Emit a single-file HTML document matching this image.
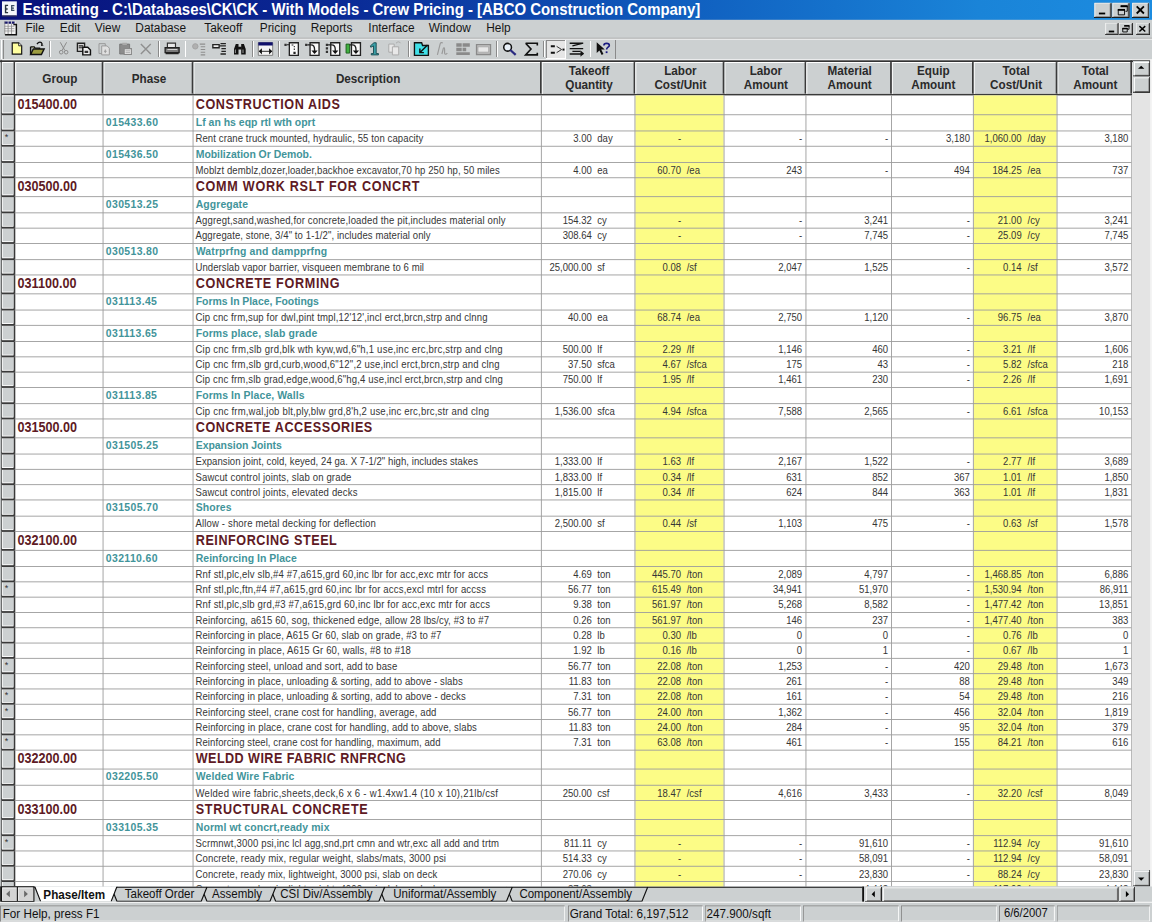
<!DOCTYPE html>
<html><head><meta charset="utf-8">
<style>
html,body{margin:0;padding:0;width:1152px;height:922px;overflow:hidden;background:#ccd0d1;}
#w{position:absolute;left:0;top:0;width:1280px;height:1024px;transform:scale(0.9);transform-origin:0 0;background:#ccd0d1;font-family:"Liberation Sans",sans-serif;overflow:hidden;}
#w div{position:absolute;}
.title{left:0;top:0;width:1280px;height:22px;background:linear-gradient(to right,#08107a 0%,#0a2a96 30%,#1060c0 60%,#1a84d8 85%,#1c8ce0 100%);}
.ttext{left:25px;top:1.5px;font-size:16.6px;font-weight:bold;color:#fff;white-space:pre;line-height:19px;transform:scaleY(1.1);transform-origin:0 15.5px;}
.mi{top:23.8px;font-size:13.2px;color:#161616;white-space:pre;line-height:15px;transform:scaleY(1.08);transform-origin:0 12px;}
.btn{background:#ccd0d1;box-shadow:inset -1px -1px #1a1a1a, inset 1px 1px #f4f4f4, inset -2px -2px #808080;}
.hc{top:69px;height:35px;background:#ccd0d1;border-right:2px solid #3a3a3a;box-shadow:inset 1px 1px #fff;}
#w .hc .hh{left:3px;right:0;text-align:center;font-size:13px;font-weight:bold;color:#2a2a2a;line-height:15px;white-space:pre;transform:scaleY(1.12);transform-origin:0 12px;}
.rh{left:2.2px;width:12.8px;background:#ccd0d1;box-shadow:inset 1px 1px #fff;}
.rhl{left:2px;width:14px;height:2px;background:#3a3a3a;}
.st{position:absolute;left:3px;top:2px;font-size:10px;color:#333;}
.hl{left:16px;width:1241px;height:1px;background:#9c9c9c;}
.vl{top:106px;width:1px;height:880px;background:#9c9c9c;}
.tg{font-size:14px;font-weight:bold;color:#5e1a24;line-height:14px;white-space:pre;}
.tg{transform:scaleY(1.12);transform-origin:0 11.85px;}
.tp{font-size:11.6px;font-weight:bold;color:#42949a;line-height:11.6px;white-space:pre;}
.ti{font-size:10.6px;color:#363636;line-height:10.6px;white-space:pre;transform:scaleY(1.17);transform-origin:0 8.97px;}
.yel{top:106px;height:880px;background:#fcfc86;}
.sb{background:#ccd0d1;box-shadow:inset -1px -1px #1a1a1a, inset 1px 1px #ccd0d1, inset 2px 2px #fff, inset -2px -2px #808080;}
.tab{font-size:12.8px;color:#111;line-height:1;white-space:pre;transform:scaleY(1.1);transform-origin:0 0.85em;}
.sp{top:1006px;height:18px;box-shadow:inset 1px 1px #808080, inset -1px -1px #fff;}
.stx{top:1009.3px;font-size:13px;color:#111;line-height:1;white-space:pre;transform:scaleY(1.1);transform-origin:0 0.85em;}
</style></head><body>
<div id="w">
<div class="title"></div>
<svg style="position:absolute;left:0;top:0" width="22" height="22">
<rect x="2.2" y="1.5" width="16.5" height="16" fill="#f4f6fa"/><rect x="2.2" y="17" width="16.5" height="1.5" fill="#30305a"/>
<path d="M9 6H6.2V14H9M6.2 10H8.5" fill="none" stroke="#2a3440" stroke-width="1.6"/>
<path d="M16 6.2H13V11.6H16M13 9H15.5" fill="none" stroke="#3a4a60" stroke-width="1.4"/>
</svg>
<div class="ttext">Estimating - C:\Databases\CK\CK - With Models - Crew Pricing - [ABCO Construction Company]</div>
<div class="btn" style="left:1216px;top:3px;width:19px;height:17px;"></div>
<div class="btn" style="left:1236px;top:3px;width:19px;height:17px;"></div>
<div class="btn" style="left:1258px;top:3px;width:19px;height:17px;"></div>
<svg style="position:absolute;left:1216px;top:3px" width="61" height="17">
<rect x="5" y="11" width="7" height="2" fill="#000"/>
<path d="M26.5 7.5h7v6h-7z" fill="none" stroke="#000" stroke-width="1"/><rect x="26" y="7" width="8" height="2" fill="#000"/>
<path d="M29.5 3.5h7v6h-2" fill="none" stroke="#000" stroke-width="1"/><rect x="29" y="3" width="8" height="2" fill="#000"/>
<path d="M47 4l8 8M55 4l-8 8" stroke="#000" stroke-width="2"/>
</svg>
<div class="mi" style="left:28.3px">File</div>
<div class="mi" style="left:66.4px">Edit</div>
<div class="mi" style="left:105.3px">View</div>
<div class="mi" style="left:150.4px">Database</div>
<div class="mi" style="left:227px">Takeoff</div>
<div class="mi" style="left:288.6px">Pricing</div>
<div class="mi" style="left:345.3px">Reports</div>
<div class="mi" style="left:409.3px">Interface</div>
<div class="mi" style="left:476.3px">Window</div>
<div class="mi" style="left:540.3px">Help</div>
<svg style="position:absolute;left:3px;top:23px" width="18" height="18">
<rect x="2" y="1" width="12.5" height="14.5" fill="#f2f2f2"/>
<path d="M2 1h3.6v2.4H2zM6.4 1h3v2.4h-3zM10.2 1h3v2.4h-3z" fill="#16166a"/>
<path d="M2 6.2h11M2 8.8h11M2 11.4h11" stroke="#9a9a9a" stroke-width="0.9"/>
<path d="M6 3v12.5M9.8 3v12.5" stroke="#888" stroke-width="0.9"/>
<path d="M2.3 1v14.6" stroke="#777" stroke-width="0.8"/>
<path d="M11.8 4.2H15.2V15.7H2.6" fill="none" stroke="#111" stroke-width="1.6"/>
</svg>
<div class="btn" style="left:1228px;top:25px;width:15px;height:14px;"></div>
<div class="btn" style="left:1243px;top:25px;width:16px;height:14px;"></div>
<div class="btn" style="left:1262px;top:25px;width:16px;height:14px;"></div>
<svg style="position:absolute;left:1228px;top:25px" width="50" height="14">
<rect x="4" y="9" width="6" height="2" fill="#000"/>
<path d="M19.5 6.5h5v4h-5z" fill="none" stroke="#000" stroke-width="1"/><rect x="19" y="6" width="6" height="1.6" fill="#000"/>
<path d="M21.5 3.5h5v4h-1.5" fill="none" stroke="#000" stroke-width="1"/><rect x="21" y="3" width="6" height="1.6" fill="#000"/>
<path d="M38 4l6.5 6M44.5 4l-6.5 6" stroke="#000" stroke-width="1.6"/>
</svg>
<div style="left:0;top:42px;width:1280px;height:1px;background:#9c9c9c"></div>
<div style="left:0;top:43px;width:1280px;height:1px;background:#f8f8f8"></div>
<svg style="position:absolute;left:0;top:43px" width="700" height="23" viewBox="0 0 700 23" shape-rendering="crispEdges">
<!-- grip -->
<rect x="1" y="1" width="1.5" height="21" fill="#fff"/><rect x="3" y="1" width="1.5" height="21" fill="#8a8a8a"/>
<!-- separators -->
<g fill="#8a8a8a"><rect x="54.5" y="3" width="1" height="17"/><rect x="176" y="3" width="1" height="17"/><rect x="205" y="3" width="1" height="17"/><rect x="280" y="3" width="1" height="17"/><rect x="309" y="3" width="1" height="17"/><rect x="453" y="3" width="1" height="17"/><rect x="551.5" y="3" width="1" height="17"/><rect x="603.5" y="3" width="1" height="17"/><rect x="655" y="3" width="1" height="17"/></g>
<g fill="#fff"><rect x="55.5" y="3" width="1" height="17"/><rect x="177" y="3" width="1" height="17"/><rect x="206" y="3" width="1" height="17"/><rect x="281" y="3" width="1" height="17"/><rect x="310" y="3" width="1" height="17"/><rect x="454" y="3" width="1" height="17"/><rect x="552.5" y="3" width="1" height="17"/><rect x="604.5" y="3" width="1" height="17"/><rect x="656" y="3" width="1" height="17"/></g>
<g shape-rendering="geometricPrecision">
<!-- new doc -->
<path d="M13.6 4.6h7.2l3.3 3.3v9.2h-10.5z" fill="#ffffa0" stroke="#111" stroke-width="1.3"/><path d="M20.8 4.6v3.3h3.3" fill="#fff" stroke="#111" stroke-width="1"/>
<!-- open folder -->
<path d="M34 9h4l1 1.5h5v2.5" fill="#e8e890" stroke="#111" stroke-width="1.4"/>
<path d="M34 17.5l3-6h12l-3 6z" fill="#9c9c40" stroke="#111" stroke-width="1.6"/>
<path d="M34 9v8.5" stroke="#111" stroke-width="1.6"/>
<path d="M41 6c2-3 5-3 6 0" fill="none" stroke="#111" stroke-width="1.3"/><path d="M46 5l2.5 2.5l-3 0.5z" fill="#111"/>
<!-- cut (gray) -->
<g fill="none" stroke="#8a8a8a" stroke-width="1.1"><path d="M67 4l5 9M74 4l-5 9"/><circle cx="68" cy="15" r="2"/><circle cx="73.5" cy="15" r="2"/></g>
<!-- copy -->
<path d="M86 5h8v9h-8z" fill="#d8d8d8" stroke="#222" stroke-width="1.5"/><path d="M87.5 8h5M87.5 10h5" stroke="#222" stroke-width="1.2"/>
<path d="M92 9.5h5.5l3 3v5.5h-8.5z" fill="#f0f0f0" stroke="#111" stroke-width="1.6"/><path d="M94 13.5h4v2.5h-4z" fill="#333"/>
<!-- doc grayed -->
<g fill="none" stroke="#9a9a9a" stroke-width="1.1"><path d="M110 5.5h7v11h-7z"/><path d="M113 8h6l2.5 2.5v7.5h-8.5z" fill="#e0e0e0"/><path d="M117 12v4M115.5 14h3"/></g>
<!-- clipboard grayed -->
<path d="M133 6h11v11h-11z" fill="#8c8c8c" stroke="#777" stroke-width="1"/><path d="M136 4.5h5v2.5h-5z" fill="#aaa"/><path d="M138 11h8v6.5h-8z" fill="#e6e6e6" stroke="#888" stroke-width="1.2"/><path d="M139.5 13.5h5M139.5 15.5h5" stroke="#999" stroke-width="0.8"/>
<!-- X gray -->
<path d="M156.5 6l11 11M167.5 6l-11 11" stroke="#909090" stroke-width="1.6"/>
<!-- printer -->
<path d="M186 5h9v5h-9z" fill="#e8e8e8" stroke="#333" stroke-width="1.3"/>
<path d="M183.5 10h15.5v5.5h-15.5z" fill="#7a7a7a" stroke="#222" stroke-width="1.5" rx="1"/>
<path d="M184 16.5h14.5" stroke="#222" stroke-width="1.6"/><path d="M186 12h11" stroke="#ddd" stroke-width="1"/>
<!-- gear list gray -->
<g stroke="#a0a0a0" fill="#b0b0b0" stroke-width="1"><circle cx="217" cy="8.5" r="3"/><path d="M222 6h6M223 9h5M223 12h5M223 15h5M223 18h5" fill="none" stroke="#8e8e8e" stroke-width="1.2"/></g>
<!-- rect list -->
<path d="M236.5 6.5h7v3.5h-7z" fill="#eee" stroke="#222" stroke-width="1.5"/><path d="M244 8h7M245 5.5h6M246 11h5M246 14h5M245 17h6" stroke="#222" stroke-width="1.5"/>
<!-- binoculars -->
<path d="M260 17.5v-6l2-5.5h3v11.5z M268 17.5v-11.5h3l2 5.5v6z" fill="#111"/><path d="M264.5 9h4v3h-4z" fill="#111"/><path d="M261.5 12v4M270 12v4" stroke="#aaa" stroke-width="1"/>
<!-- window arrows -->
<path d="M287 4.5h16v14h-16z" fill="#f4f4f4" stroke="#777" stroke-width="1"/><path d="M287 4h16v3.5h-16z" fill="#10106a"/>
<path d="M288 14h14" stroke="#555" stroke-width="1.5"/><path d="M287.5 14l3.5-3.5v7z M302.5 14l-3.5-3.5v7z" fill="#111"/>
<!-- dotted doc -->
<path d="M321.5 4.5h10v14h-10z" fill="#fafafa" stroke="#222" stroke-width="1.5"/><path d="M316 5.5h2.5v2.5h-2.5z" fill="#333"/><path d="M318.5 6.8h3M324 7h2M327 8v1.5M327 11v1.5" stroke="#222" stroke-width="1.2"/><path d="M326 14.5h2.5v2.5h-2.5z" fill="#222"/>
<!-- doc arrow -->
<path d="M344.5 4.5h10v14h-10z" fill="#fafafa" stroke="#222" stroke-width="1.5"/><path d="M339 5.5h2.5v2.5h-2.5z" fill="#333"/><path d="M341.5 6.8h4c3 0 4 2 4 5v3" fill="none" stroke="#222" stroke-width="1.5"/><path d="M346 13h7l-3.5 4z" fill="#111"/>
<!-- doc arrow dots -->
<path d="M367.5 4.5h10v14h-10z" fill="#fafafa" stroke="#222" stroke-width="1.5"/><path d="M362 5.5h2.5v2.5h-2.5zM362 9.5h2.5v2.5h-2.5zM362 13.5h2.5v2.5h-2.5z" fill="#333"/><path d="M364.5 6.8h4c3 0 4 2 4 5v3" fill="none" stroke="#222" stroke-width="1.5"/><path d="M369 13h7l-3.5 4z" fill="#111"/>
<!-- green doc arrow -->
<path d="M390.5 4.5h10v14h-10z" fill="#fafafa" stroke="#222" stroke-width="1.5"/><path d="M384.5 6h4v10h-4z" fill="#40b040" stroke="#1a5a1a" stroke-width="1"/><path d="M388.5 6.8h3c3 0 4 2 4 5v3" fill="none" stroke="#222" stroke-width="1.5"/><path d="M392 13h7l-3.5 4z" fill="#111"/>
<!-- 1 teal -->
<path d="M411.5 8l4-3.5h2.5v12h2.5v1.5h-8v-1.5h2.5v-8.5l-3 1.5z" fill="#3aa0a8" stroke="#1a4a50" stroke-width="1"/>
<!-- gray docs -->
<g fill="#e8e8e8" stroke="#a6a6a6" stroke-width="1"><path d="M432 6h6v9h-6z"/><path d="M436 9h7v9h-7z"/><path d="M440 5c2-2 4-2 5 0" fill="none"/></g>
<!-- cyan -->
<path d="M460.5 4.5h8l1 3h6.5v11h-15.5z" fill="#40e0e8" stroke="#111" stroke-width="1.5"/><path d="M467 15l8-8M466.5 11v4.5h4.5" fill="none" stroke="#111" stroke-width="1.6"/>
<!-- fx gray -->
<path d="M486 18l3-12c0.5-2 2-2 3-1M491 17l1.5-6c0.5-1.5 1.5-1 1.5 1v4c0 1.5 1.5 2 3 0" fill="none" stroke="#9a9a9a" stroke-width="1.3"/>
<!-- grid gray -->
<path d="M507 5h6v4h-6zM514 5h8v4h-8zM507 10h6v4h-6zM514 10h4v4h-4zM507 15h15v3h-15z" fill="#8a8a8a"/>
<!-- window gray -->
<path d="M529.5 6.5h15.5v11h-15.5z" fill="#c4c4c4" stroke="#8a8a8a" stroke-width="1.5"/><path d="M531 9h12v6h-12z" fill="#e8e8e8" stroke="#9a9a9a" stroke-width="0.8"/>
<!-- magnifier -->
<circle cx="564" cy="9.5" r="4.3" fill="#e8f0f8" stroke="#111" stroke-width="1.7"/><path d="M567 12.5l6 5.5" stroke="#2a2a80" stroke-width="2.4"/>
<!-- sigma -->
<path d="M584 5h13v2.5M584 5l6 6.5l-6 6.5h13v-2.5" fill="none" stroke="#111" stroke-width="1.8"/>
</g>
<!-- pressed button -->
<rect x="607" y="1" width="22" height="21" fill="#e6e6e6"/><rect x="607" y="1" width="22" height="1" fill="#8a8a8a"/><rect x="607" y="1" width="1" height="21" fill="#8a8a8a"/><rect x="607" y="21" width="22" height="1" fill="#fff"/><rect x="628" y="1" width="1" height="21" fill="#fff"/>
<g shape-rendering="geometricPrecision">
<path d="M612 8.5h4.5M612 15.5h4.5" stroke="#111" stroke-width="2.2"/><path d="M618.5 8.5l5.5 3.5l-5.5 3.5" fill="none" stroke="#222" stroke-width="1"/><rect x="625" y="11" width="2.2" height="2.2" fill="#111"/>
<!-- stack arrows -->
<path d="M633 5h15M636 8l12-3M633 11h15M636 14h9M633 17h15" fill="none" stroke="#111" stroke-width="1.5"/><path d="M645 13l4 3.5l-4 3.5z" fill="#111"/>
<!-- ? pointer -->
<path d="M663 4v12l3-3l2.5 5l2-1l-2.5-5h4z" fill="#111"/><path d="M671 7.5c0-3 6-3 6 0c0 2-3 2-3 4.5" fill="none" stroke="#1a1a80" stroke-width="1.8"/><rect x="673" y="14" width="2" height="2" fill="#1a1a80"/>
</g>
<rect x="683" y="1" width="1" height="21" fill="#8a8a8a"/>
</svg>

<div style="left:2px;top:66px;width:1278px;height:920px;background:#fff"></div>
<div style="left:0;top:67px;width:1258px;height:2px;background:#333"></div>
<div style="left:1px;top:67px;width:1.2px;height:918px;background:#333"></div>
<div class="rh" style="top:69px;height:35px"></div>
<div style="left:15px;top:69px;width:1.6px;height:916px;background:#3a3a3a"></div>
<div style="left:2px;top:104px;width:1256px;height:2px;background:#3a3a3a"></div>
<div class="yel" style="left:706px;width:98px"></div>
<div class="yel" style="left:1082px;width:92px"></div>
<div class="hc" style="left:17px;width:96px"><div class="hh" style="top:11px">Group</div></div>
<div class="hc" style="left:115px;width:98px"><div class="hh" style="top:11px">Phase</div></div>
<div class="hc" style="left:215px;width:385px"><div class="hh" style="top:11px">Description</div></div>
<div class="hc" style="left:602px;width:102px"><div class="hh" style="top:1.5px">Takeoff</div><div class="hh" style="top:17.7px">Quantity</div></div>
<div class="hc" style="left:706px;width:97px"><div class="hh" style="top:1.5px">Labor</div><div class="hh" style="top:17.7px">Cost/Unit</div></div>
<div class="hc" style="left:805px;width:89px"><div class="hh" style="top:1.5px">Labor</div><div class="hh" style="top:17.7px">Amount</div></div>
<div class="hc" style="left:896px;width:93px"><div class="hh" style="top:1.5px">Material</div><div class="hh" style="top:17.7px">Amount</div></div>
<div class="hc" style="left:991px;width:89px"><div class="hh" style="top:1.5px">Equip</div><div class="hh" style="top:17.7px">Amount</div></div>
<div class="hc" style="left:1082px;width:91px"><div class="hh" style="top:1.5px">Total</div><div class="hh" style="top:17.7px">Cost/Unit</div></div>
<div class="hc" style="left:1175px;width:81px"><div class="hh" style="top:1.5px">Total</div><div class="hh" style="top:17.7px">Amount</div></div>
<div class="vl" style="left:114px"></div>
<div class="vl" style="left:214px"></div>
<div class="vl" style="left:601px"></div>
<div class="vl" style="left:705px"></div>
<div class="vl" style="left:804px"></div>
<div class="vl" style="left:895px"></div>
<div class="vl" style="left:990px"></div>
<div class="vl" style="left:1081px"></div>
<div class="vl" style="left:1174px"></div>
<div class="vl" style="left:1257px"></div>
<div class="rh" style="top:106px;height:19px"></div>
<div class="tg gc" style="top:108.75px;left:19.5px">015400.00</div>
<div class="tg gd" style="top:108.75px;left:217.5px;letter-spacing:0.664px">CONSTRUCTION AIDS</div>
<div class="rh" style="top:127px;height:16px"></div>
<div class="tp" style="top:130.2px;left:117.6px;letter-spacing:0.4px">015433.60</div>
<div class="tp" style="top:130.2px;left:217.5px;letter-spacing:0.025px">Lf an hs eqp rtl wth oprt</div>
<div class="rh" style="top:145px;height:15px"><span class=st>*</span></div>
<div class="ti" style="top:148.6px;left:217.2px;letter-spacing:0.113px">Rent crane truck mounted, hydraulic, 55 ton capacity</div>
<div class="ti r" style="top:148.6px;right:622.4px">3.00</div>
<div class="ti" style="top:148.6px;left:663.7px">day</div>
<div class="ti r" style="top:148.6px;right:523.2px">-</div>
<div class="ti r" style="top:148.6px;right:388.79999999999995px">-</div>
<div class="ti r" style="top:148.6px;right:293.20000000000005px">-</div>
<div class="ti r" style="top:148.6px;right:202.29999999999995px">3,180</div>
<div class="ti r" style="top:148.6px;right:144.79999999999995px">1,060.00</div>
<div class="ti" style="top:148.6px;left:1141.8px">/day</div>
<div class="ti r" style="top:148.6px;right:26.40000000000009px">3,180</div>
<div class="rh" style="top:162px;height:16px"></div>
<div class="tp" style="top:165.2px;left:117.6px;letter-spacing:0.4px">015436.50</div>
<div class="tp" style="top:165.2px;left:217.5px;letter-spacing:-0.026px">Mobilization Or Demob.</div>
<div class="rh" style="top:180px;height:15px"></div>
<div class="ti" style="top:183.6px;left:217.2px;letter-spacing:0.117px">Moblzt demblz,dozer,loader,backhoe excavator,70 hp 250 hp, 50 miles</div>
<div class="ti r" style="top:183.6px;right:622.4px">4.00</div>
<div class="ti" style="top:183.6px;left:663.7px">ea</div>
<div class="ti r" style="top:183.6px;right:523.2px">60.70</div>
<div class="ti" style="top:183.6px;left:763px">/ea</div>
<div class="ti r" style="top:183.6px;right:388.79999999999995px">243</div>
<div class="ti r" style="top:183.6px;right:293.20000000000005px">-</div>
<div class="ti r" style="top:183.6px;right:202.29999999999995px">494</div>
<div class="ti r" style="top:183.6px;right:144.79999999999995px">184.25</div>
<div class="ti" style="top:183.6px;left:1141.8px">/ea</div>
<div class="ti r" style="top:183.6px;right:26.40000000000009px">737</div>
<div class="rh" style="top:197px;height:19px"></div>
<div class="tg gc" style="top:199.75px;left:19.5px">030500.00</div>
<div class="tg gd" style="top:199.75px;left:217.5px;letter-spacing:0.807px">COMM WORK RSLT FOR CONCRT</div>
<div class="rh" style="top:218px;height:16px"></div>
<div class="tp" style="top:221.2px;left:117.6px;letter-spacing:0.4px">030513.25</div>
<div class="tp" style="top:221.2px;left:217.5px;letter-spacing:0.085px">Aggregate</div>
<div class="rh" style="top:236px;height:15px"></div>
<div class="ti" style="top:239.6px;left:217.2px;letter-spacing:0.169px">Aggregt,sand,washed,for concrete,loaded the pit,includes material only</div>
<div class="ti r" style="top:239.6px;right:622.4px">154.32</div>
<div class="ti" style="top:239.6px;left:663.7px">cy</div>
<div class="ti r" style="top:239.6px;right:523.2px">-</div>
<div class="ti r" style="top:239.6px;right:388.79999999999995px">-</div>
<div class="ti r" style="top:239.6px;right:293.20000000000005px">3,241</div>
<div class="ti r" style="top:239.6px;right:202.29999999999995px">-</div>
<div class="ti r" style="top:239.6px;right:144.79999999999995px">21.00</div>
<div class="ti" style="top:239.6px;left:1141.8px">/cy</div>
<div class="ti r" style="top:239.6px;right:26.40000000000009px">3,241</div>
<div class="rh" style="top:253px;height:15px"></div>
<div class="ti" style="top:256.6px;left:217.2px;letter-spacing:0.105px">Aggregate, stone, 3/4" to 1-1/2", includes material only</div>
<div class="ti r" style="top:256.6px;right:622.4px">308.64</div>
<div class="ti" style="top:256.6px;left:663.7px">cy</div>
<div class="ti r" style="top:256.6px;right:523.2px">-</div>
<div class="ti r" style="top:256.6px;right:388.79999999999995px">-</div>
<div class="ti r" style="top:256.6px;right:293.20000000000005px">7,745</div>
<div class="ti r" style="top:256.6px;right:202.29999999999995px">-</div>
<div class="ti r" style="top:256.6px;right:144.79999999999995px">25.09</div>
<div class="ti" style="top:256.6px;left:1141.8px">/cy</div>
<div class="ti r" style="top:256.6px;right:26.40000000000009px">7,745</div>
<div class="rh" style="top:270px;height:16px"></div>
<div class="tp" style="top:273.2px;left:117.6px;letter-spacing:0.4px">030513.80</div>
<div class="tp" style="top:273.2px;left:217.5px;letter-spacing:0.155px">Watrprfng and dampprfng</div>
<div class="rh" style="top:288px;height:15px"></div>
<div class="ti" style="top:291.6px;left:217.2px;letter-spacing:0.085px">Underslab vapor barrier, visqueen membrane to 6 mil</div>
<div class="ti r" style="top:291.6px;right:622.4px">25,000.00</div>
<div class="ti" style="top:291.6px;left:663.7px">sf</div>
<div class="ti r" style="top:291.6px;right:523.2px">0.08</div>
<div class="ti" style="top:291.6px;left:763px">/sf</div>
<div class="ti r" style="top:291.6px;right:388.79999999999995px">2,047</div>
<div class="ti r" style="top:291.6px;right:293.20000000000005px">1,525</div>
<div class="ti r" style="top:291.6px;right:202.29999999999995px">-</div>
<div class="ti r" style="top:291.6px;right:144.79999999999995px">0.14</div>
<div class="ti" style="top:291.6px;left:1141.8px">/sf</div>
<div class="ti r" style="top:291.6px;right:26.40000000000009px">3,572</div>
<div class="rh" style="top:305px;height:19px"></div>
<div class="tg gc" style="top:307.75px;left:19.5px">031100.00</div>
<div class="tg gd" style="top:307.75px;left:217.5px;letter-spacing:0.757px">CONCRETE FORMING</div>
<div class="rh" style="top:326px;height:16px"></div>
<div class="tp" style="top:329.2px;left:117.6px;letter-spacing:0.4px">031113.45</div>
<div class="tp" style="top:329.2px;left:217.5px;letter-spacing:-0.045px">Forms In Place, Footings</div>
<div class="rh" style="top:344px;height:15px"></div>
<div class="ti" style="top:347.6px;left:217.2px;letter-spacing:0.156px">Cip cnc frm,sup for dwl,pint tmpl,12'12',incl erct,brcn,strp and clnng</div>
<div class="ti r" style="top:347.6px;right:622.4px">40.00</div>
<div class="ti" style="top:347.6px;left:663.7px">ea</div>
<div class="ti r" style="top:347.6px;right:523.2px">68.74</div>
<div class="ti" style="top:347.6px;left:763px">/ea</div>
<div class="ti r" style="top:347.6px;right:388.79999999999995px">2,750</div>
<div class="ti r" style="top:347.6px;right:293.20000000000005px">1,120</div>
<div class="ti r" style="top:347.6px;right:202.29999999999995px">-</div>
<div class="ti r" style="top:347.6px;right:144.79999999999995px">96.75</div>
<div class="ti" style="top:347.6px;left:1141.8px">/ea</div>
<div class="ti r" style="top:347.6px;right:26.40000000000009px">3,870</div>
<div class="rh" style="top:361px;height:16px"></div>
<div class="tp" style="top:364.2px;left:117.6px;letter-spacing:0.4px">031113.65</div>
<div class="tp" style="top:364.2px;left:217.5px;letter-spacing:0.103px">Forms place, slab grade</div>
<div class="rh" style="top:379px;height:15px"></div>
<div class="ti" style="top:382.6px;left:217.2px;letter-spacing:0.25px">Cip cnc frm,slb grd,blk wth kyw,wd,6"h,1 use,inc erc,brc,strp and clng</div>
<div class="ti r" style="top:382.6px;right:622.4px">500.00</div>
<div class="ti" style="top:382.6px;left:663.7px">lf</div>
<div class="ti r" style="top:382.6px;right:523.2px">2.29</div>
<div class="ti" style="top:382.6px;left:763px">/lf</div>
<div class="ti r" style="top:382.6px;right:388.79999999999995px">1,146</div>
<div class="ti r" style="top:382.6px;right:293.20000000000005px">460</div>
<div class="ti r" style="top:382.6px;right:202.29999999999995px">-</div>
<div class="ti r" style="top:382.6px;right:144.79999999999995px">3.21</div>
<div class="ti" style="top:382.6px;left:1141.8px">/lf</div>
<div class="ti r" style="top:382.6px;right:26.40000000000009px">1,606</div>
<div class="rh" style="top:396px;height:15px"></div>
<div class="ti" style="top:399.6px;left:217.2px;letter-spacing:0.206px">Cip cnc frm,slb grd,curb,wood,6"12",2 use,incl erct,brcn,strp and clng</div>
<div class="ti r" style="top:399.6px;right:622.4px">37.50</div>
<div class="ti" style="top:399.6px;left:663.7px">sfca</div>
<div class="ti r" style="top:399.6px;right:523.2px">4.67</div>
<div class="ti" style="top:399.6px;left:763px">/sfca</div>
<div class="ti r" style="top:399.6px;right:388.79999999999995px">175</div>
<div class="ti r" style="top:399.6px;right:293.20000000000005px">43</div>
<div class="ti r" style="top:399.6px;right:202.29999999999995px">-</div>
<div class="ti r" style="top:399.6px;right:144.79999999999995px">5.82</div>
<div class="ti" style="top:399.6px;left:1141.8px">/sfca</div>
<div class="ti r" style="top:399.6px;right:26.40000000000009px">218</div>
<div class="rh" style="top:413px;height:15px"></div>
<div class="ti" style="top:416.6px;left:217.2px;letter-spacing:0.182px">Cip cnc frm,slb grad,edge,wood,6"hg,4 use,incl erct,brcn,strp and clng</div>
<div class="ti r" style="top:416.6px;right:622.4px">750.00</div>
<div class="ti" style="top:416.6px;left:663.7px">lf</div>
<div class="ti r" style="top:416.6px;right:523.2px">1.95</div>
<div class="ti" style="top:416.6px;left:763px">/lf</div>
<div class="ti r" style="top:416.6px;right:388.79999999999995px">1,461</div>
<div class="ti r" style="top:416.6px;right:293.20000000000005px">230</div>
<div class="ti r" style="top:416.6px;right:202.29999999999995px">-</div>
<div class="ti r" style="top:416.6px;right:144.79999999999995px">2.26</div>
<div class="ti" style="top:416.6px;left:1141.8px">/lf</div>
<div class="ti r" style="top:416.6px;right:26.40000000000009px">1,691</div>
<div class="rh" style="top:430px;height:16px"></div>
<div class="tp" style="top:433.2px;left:117.6px;letter-spacing:0.4px">031113.85</div>
<div class="tp" style="top:433.2px;left:217.5px;letter-spacing:0.106px">Forms In Place, Walls</div>
<div class="rh" style="top:448px;height:15px"></div>
<div class="ti" style="top:451.6px;left:217.2px;letter-spacing:0.211px">Cip cnc frm,wal,job blt,ply,blw grd,8'h,2 use,inc erc,brc,str and clng</div>
<div class="ti r" style="top:451.6px;right:622.4px">1,536.00</div>
<div class="ti" style="top:451.6px;left:663.7px">sfca</div>
<div class="ti r" style="top:451.6px;right:523.2px">4.94</div>
<div class="ti" style="top:451.6px;left:763px">/sfca</div>
<div class="ti r" style="top:451.6px;right:388.79999999999995px">7,588</div>
<div class="ti r" style="top:451.6px;right:293.20000000000005px">2,565</div>
<div class="ti r" style="top:451.6px;right:202.29999999999995px">-</div>
<div class="ti r" style="top:451.6px;right:144.79999999999995px">6.61</div>
<div class="ti" style="top:451.6px;left:1141.8px">/sfca</div>
<div class="ti r" style="top:451.6px;right:26.40000000000009px">10,153</div>
<div class="rh" style="top:465px;height:19px"></div>
<div class="tg gc" style="top:467.75px;left:19.5px">031500.00</div>
<div class="tg gd" style="top:467.75px;left:217.5px;letter-spacing:0.647px">CONCRETE ACCESSORIES</div>
<div class="rh" style="top:486px;height:16px"></div>
<div class="tp" style="top:489.2px;left:117.6px;letter-spacing:0.4px">031505.25</div>
<div class="tp" style="top:489.2px;left:217.5px;letter-spacing:-0.021px">Expansion Joints</div>
<div class="rh" style="top:504px;height:15px"></div>
<div class="ti" style="top:507.6px;left:217.2px;letter-spacing:0.076px">Expansion joint, cold, keyed, 24 ga. X 7-1/2" high, includes stakes</div>
<div class="ti r" style="top:507.6px;right:622.4px">1,333.00</div>
<div class="ti" style="top:507.6px;left:663.7px">lf</div>
<div class="ti r" style="top:507.6px;right:523.2px">1.63</div>
<div class="ti" style="top:507.6px;left:763px">/lf</div>
<div class="ti r" style="top:507.6px;right:388.79999999999995px">2,167</div>
<div class="ti r" style="top:507.6px;right:293.20000000000005px">1,522</div>
<div class="ti r" style="top:507.6px;right:202.29999999999995px">-</div>
<div class="ti r" style="top:507.6px;right:144.79999999999995px">2.77</div>
<div class="ti" style="top:507.6px;left:1141.8px">/lf</div>
<div class="ti r" style="top:507.6px;right:26.40000000000009px">3,689</div>
<div class="rh" style="top:521px;height:15px"></div>
<div class="ti" style="top:524.6px;left:217.2px;letter-spacing:0.172px">Sawcut control joints, slab on grade</div>
<div class="ti r" style="top:524.6px;right:622.4px">1,833.00</div>
<div class="ti" style="top:524.6px;left:663.7px">lf</div>
<div class="ti r" style="top:524.6px;right:523.2px">0.34</div>
<div class="ti" style="top:524.6px;left:763px">/lf</div>
<div class="ti r" style="top:524.6px;right:388.79999999999995px">631</div>
<div class="ti r" style="top:524.6px;right:293.20000000000005px">852</div>
<div class="ti r" style="top:524.6px;right:202.29999999999995px">367</div>
<div class="ti r" style="top:524.6px;right:144.79999999999995px">1.01</div>
<div class="ti" style="top:524.6px;left:1141.8px">/lf</div>
<div class="ti r" style="top:524.6px;right:26.40000000000009px">1,850</div>
<div class="rh" style="top:538px;height:15px"></div>
<div class="ti" style="top:541.6px;left:217.2px;letter-spacing:0.173px">Sawcut control joints, elevated decks</div>
<div class="ti r" style="top:541.6px;right:622.4px">1,815.00</div>
<div class="ti" style="top:541.6px;left:663.7px">lf</div>
<div class="ti r" style="top:541.6px;right:523.2px">0.34</div>
<div class="ti" style="top:541.6px;left:763px">/lf</div>
<div class="ti r" style="top:541.6px;right:388.79999999999995px">624</div>
<div class="ti r" style="top:541.6px;right:293.20000000000005px">844</div>
<div class="ti r" style="top:541.6px;right:202.29999999999995px">363</div>
<div class="ti r" style="top:541.6px;right:144.79999999999995px">1.01</div>
<div class="ti" style="top:541.6px;left:1141.8px">/lf</div>
<div class="ti r" style="top:541.6px;right:26.40000000000009px">1,831</div>
<div class="rh" style="top:555px;height:16px"></div>
<div class="tp" style="top:558.2px;left:117.6px;letter-spacing:0.4px">031505.70</div>
<div class="tp" style="top:558.2px;left:217.5px;letter-spacing:0.096px">Shores</div>
<div class="rh" style="top:573px;height:15px"></div>
<div class="ti" style="top:576.6px;left:217.2px;letter-spacing:0.174px">Allow - shore metal decking for deflection</div>
<div class="ti r" style="top:576.6px;right:622.4px">2,500.00</div>
<div class="ti" style="top:576.6px;left:663.7px">sf</div>
<div class="ti r" style="top:576.6px;right:523.2px">0.44</div>
<div class="ti" style="top:576.6px;left:763px">/sf</div>
<div class="ti r" style="top:576.6px;right:388.79999999999995px">1,103</div>
<div class="ti r" style="top:576.6px;right:293.20000000000005px">475</div>
<div class="ti r" style="top:576.6px;right:202.29999999999995px">-</div>
<div class="ti r" style="top:576.6px;right:144.79999999999995px">0.63</div>
<div class="ti" style="top:576.6px;left:1141.8px">/sf</div>
<div class="ti r" style="top:576.6px;right:26.40000000000009px">1,578</div>
<div class="rh" style="top:590px;height:19px"></div>
<div class="tg gc" style="top:592.75px;left:19.5px">032100.00</div>
<div class="tg gd" style="top:592.75px;left:217.5px;letter-spacing:0.607px">REINFORCING STEEL</div>
<div class="rh" style="top:611px;height:16px"></div>
<div class="tp" style="top:614.2px;left:117.6px;letter-spacing:0.4px">032110.60</div>
<div class="tp" style="top:614.2px;left:217.5px;letter-spacing:0.038px">Reinforcing In Place</div>
<div class="rh" style="top:629px;height:15px"></div>
<div class="ti" style="top:632.6px;left:217.2px;letter-spacing:0.19px">Rnf stl,plc,elv slb,#4 #7,a615,grd 60,inc lbr for acc,exc mtr for accs</div>
<div class="ti r" style="top:632.6px;right:622.4px">4.69</div>
<div class="ti" style="top:632.6px;left:663.7px">ton</div>
<div class="ti r" style="top:632.6px;right:523.2px">445.70</div>
<div class="ti" style="top:632.6px;left:763px">/ton</div>
<div class="ti r" style="top:632.6px;right:388.79999999999995px">2,089</div>
<div class="ti r" style="top:632.6px;right:293.20000000000005px">4,797</div>
<div class="ti r" style="top:632.6px;right:202.29999999999995px">-</div>
<div class="ti r" style="top:632.6px;right:144.79999999999995px">1,468.85</div>
<div class="ti" style="top:632.6px;left:1141.8px">/ton</div>
<div class="ti r" style="top:632.6px;right:26.40000000000009px">6,886</div>
<div class="rh" style="top:646px;height:15px"><span class=st>*</span></div>
<div class="ti" style="top:649.6px;left:217.2px;letter-spacing:0.198px">Rnf stl,plc,ftn,#4 #7,a615,grd 60,inc lbr for accs,excl mtrl for accss</div>
<div class="ti r" style="top:649.6px;right:622.4px">56.77</div>
<div class="ti" style="top:649.6px;left:663.7px">ton</div>
<div class="ti r" style="top:649.6px;right:523.2px">615.49</div>
<div class="ti" style="top:649.6px;left:763px">/ton</div>
<div class="ti r" style="top:649.6px;right:388.79999999999995px">34,941</div>
<div class="ti r" style="top:649.6px;right:293.20000000000005px">51,970</div>
<div class="ti r" style="top:649.6px;right:202.29999999999995px">-</div>
<div class="ti r" style="top:649.6px;right:144.79999999999995px">1,530.94</div>
<div class="ti" style="top:649.6px;left:1141.8px">/ton</div>
<div class="ti r" style="top:649.6px;right:26.40000000000009px">86,911</div>
<div class="rh" style="top:663px;height:15px"></div>
<div class="ti" style="top:666.6px;left:217.2px;letter-spacing:0.193px">Rnf stl,plc,slb grd,#3 #7,a615,grd 60,inc lbr for acc,exc mtr for accs</div>
<div class="ti r" style="top:666.6px;right:622.4px">9.38</div>
<div class="ti" style="top:666.6px;left:663.7px">ton</div>
<div class="ti r" style="top:666.6px;right:523.2px">561.97</div>
<div class="ti" style="top:666.6px;left:763px">/ton</div>
<div class="ti r" style="top:666.6px;right:388.79999999999995px">5,268</div>
<div class="ti r" style="top:666.6px;right:293.20000000000005px">8,582</div>
<div class="ti r" style="top:666.6px;right:202.29999999999995px">-</div>
<div class="ti r" style="top:666.6px;right:144.79999999999995px">1,477.42</div>
<div class="ti" style="top:666.6px;left:1141.8px">/ton</div>
<div class="ti r" style="top:666.6px;right:26.40000000000009px">13,851</div>
<div class="rh" style="top:680px;height:15px"></div>
<div class="ti" style="top:683.6px;left:217.2px;letter-spacing:0.142px">Reinforcing, a615 60, sog, thickened edge, allow 28 lbs/cy, #3 to #7</div>
<div class="ti r" style="top:683.6px;right:622.4px">0.26</div>
<div class="ti" style="top:683.6px;left:663.7px">ton</div>
<div class="ti r" style="top:683.6px;right:523.2px">561.97</div>
<div class="ti" style="top:683.6px;left:763px">/ton</div>
<div class="ti r" style="top:683.6px;right:388.79999999999995px">146</div>
<div class="ti r" style="top:683.6px;right:293.20000000000005px">237</div>
<div class="ti r" style="top:683.6px;right:202.29999999999995px">-</div>
<div class="ti r" style="top:683.6px;right:144.79999999999995px">1,477.40</div>
<div class="ti" style="top:683.6px;left:1141.8px">/ton</div>
<div class="ti r" style="top:683.6px;right:26.40000000000009px">383</div>
<div class="rh" style="top:697px;height:15px"></div>
<div class="ti" style="top:700.6px;left:217.2px;letter-spacing:0.115px">Reinforcing in place, A615 Gr 60, slab on grade, #3 to #7</div>
<div class="ti r" style="top:700.6px;right:622.4px">0.28</div>
<div class="ti" style="top:700.6px;left:663.7px">lb</div>
<div class="ti r" style="top:700.6px;right:523.2px">0.30</div>
<div class="ti" style="top:700.6px;left:763px">/lb</div>
<div class="ti r" style="top:700.6px;right:388.79999999999995px">0</div>
<div class="ti r" style="top:700.6px;right:293.20000000000005px">0</div>
<div class="ti r" style="top:700.6px;right:202.29999999999995px">-</div>
<div class="ti r" style="top:700.6px;right:144.79999999999995px">0.76</div>
<div class="ti" style="top:700.6px;left:1141.8px">/lb</div>
<div class="ti r" style="top:700.6px;right:26.40000000000009px">0</div>
<div class="rh" style="top:714px;height:15px"></div>
<div class="ti" style="top:717.6px;left:217.2px;letter-spacing:0.15px">Reinforcing in place, A615 Gr 60, walls, #8 to #18</div>
<div class="ti r" style="top:717.6px;right:622.4px">1.92</div>
<div class="ti" style="top:717.6px;left:663.7px">lb</div>
<div class="ti r" style="top:717.6px;right:523.2px">0.16</div>
<div class="ti" style="top:717.6px;left:763px">/lb</div>
<div class="ti r" style="top:717.6px;right:388.79999999999995px">0</div>
<div class="ti r" style="top:717.6px;right:293.20000000000005px">1</div>
<div class="ti r" style="top:717.6px;right:202.29999999999995px">-</div>
<div class="ti r" style="top:717.6px;right:144.79999999999995px">0.67</div>
<div class="ti" style="top:717.6px;left:1141.8px">/lb</div>
<div class="ti r" style="top:717.6px;right:26.40000000000009px">1</div>
<div class="rh" style="top:731px;height:15px"><span class=st>*</span></div>
<div class="ti" style="top:734.6px;left:217.2px;letter-spacing:0.111px">Reinforcing steel, unload and sort, add to base</div>
<div class="ti r" style="top:734.6px;right:622.4px">56.77</div>
<div class="ti" style="top:734.6px;left:663.7px">ton</div>
<div class="ti r" style="top:734.6px;right:523.2px">22.08</div>
<div class="ti" style="top:734.6px;left:763px">/ton</div>
<div class="ti r" style="top:734.6px;right:388.79999999999995px">1,253</div>
<div class="ti r" style="top:734.6px;right:293.20000000000005px">-</div>
<div class="ti r" style="top:734.6px;right:202.29999999999995px">420</div>
<div class="ti r" style="top:734.6px;right:144.79999999999995px">29.48</div>
<div class="ti" style="top:734.6px;left:1141.8px">/ton</div>
<div class="ti r" style="top:734.6px;right:26.40000000000009px">1,673</div>
<div class="rh" style="top:748px;height:15px"></div>
<div class="ti" style="top:751.6px;left:217.2px;letter-spacing:0.096px">Reinforcing in place, unloading &amp; sorting, add to above - slabs</div>
<div class="ti r" style="top:751.6px;right:622.4px">11.83</div>
<div class="ti" style="top:751.6px;left:663.7px">ton</div>
<div class="ti r" style="top:751.6px;right:523.2px">22.08</div>
<div class="ti" style="top:751.6px;left:763px">/ton</div>
<div class="ti r" style="top:751.6px;right:388.79999999999995px">261</div>
<div class="ti r" style="top:751.6px;right:293.20000000000005px">-</div>
<div class="ti r" style="top:751.6px;right:202.29999999999995px">88</div>
<div class="ti r" style="top:751.6px;right:144.79999999999995px">29.48</div>
<div class="ti" style="top:751.6px;left:1141.8px">/ton</div>
<div class="ti r" style="top:751.6px;right:26.40000000000009px">349</div>
<div class="rh" style="top:765px;height:15px"><span class=st>*</span></div>
<div class="ti" style="top:768.6px;left:217.2px;letter-spacing:0.103px">Reinforcing in place, unloading &amp; sorting, add to above - decks</div>
<div class="ti r" style="top:768.6px;right:622.4px">7.31</div>
<div class="ti" style="top:768.6px;left:663.7px">ton</div>
<div class="ti r" style="top:768.6px;right:523.2px">22.08</div>
<div class="ti" style="top:768.6px;left:763px">/ton</div>
<div class="ti r" style="top:768.6px;right:388.79999999999995px">161</div>
<div class="ti r" style="top:768.6px;right:293.20000000000005px">-</div>
<div class="ti r" style="top:768.6px;right:202.29999999999995px">54</div>
<div class="ti r" style="top:768.6px;right:144.79999999999995px">29.48</div>
<div class="ti" style="top:768.6px;left:1141.8px">/ton</div>
<div class="ti r" style="top:768.6px;right:26.40000000000009px">216</div>
<div class="rh" style="top:782px;height:15px"><span class=st>*</span></div>
<div class="ti" style="top:785.6px;left:217.2px;letter-spacing:0.146px">Reinforcing steel, crane cost for handling, average, add</div>
<div class="ti r" style="top:785.6px;right:622.4px">56.77</div>
<div class="ti" style="top:785.6px;left:663.7px">ton</div>
<div class="ti r" style="top:785.6px;right:523.2px">24.00</div>
<div class="ti" style="top:785.6px;left:763px">/ton</div>
<div class="ti r" style="top:785.6px;right:388.79999999999995px">1,362</div>
<div class="ti r" style="top:785.6px;right:293.20000000000005px">-</div>
<div class="ti r" style="top:785.6px;right:202.29999999999995px">456</div>
<div class="ti r" style="top:785.6px;right:144.79999999999995px">32.04</div>
<div class="ti" style="top:785.6px;left:1141.8px">/ton</div>
<div class="ti r" style="top:785.6px;right:26.40000000000009px">1,819</div>
<div class="rh" style="top:799px;height:15px"></div>
<div class="ti" style="top:802.6px;left:217.2px;letter-spacing:0.135px">Reinforcing in place, crane cost for handling, add to above, slabs</div>
<div class="ti r" style="top:802.6px;right:622.4px">11.83</div>
<div class="ti" style="top:802.6px;left:663.7px">ton</div>
<div class="ti r" style="top:802.6px;right:523.2px">24.00</div>
<div class="ti" style="top:802.6px;left:763px">/ton</div>
<div class="ti r" style="top:802.6px;right:388.79999999999995px">284</div>
<div class="ti r" style="top:802.6px;right:293.20000000000005px">-</div>
<div class="ti r" style="top:802.6px;right:202.29999999999995px">95</div>
<div class="ti r" style="top:802.6px;right:144.79999999999995px">32.04</div>
<div class="ti" style="top:802.6px;left:1141.8px">/ton</div>
<div class="ti r" style="top:802.6px;right:26.40000000000009px">379</div>
<div class="rh" style="top:816px;height:15px"><span class=st>*</span></div>
<div class="ti" style="top:819.6px;left:217.2px;letter-spacing:0.089px">Reinforcing steel, crane cost for handling, maximum, add</div>
<div class="ti r" style="top:819.6px;right:622.4px">7.31</div>
<div class="ti" style="top:819.6px;left:663.7px">ton</div>
<div class="ti r" style="top:819.6px;right:523.2px">63.08</div>
<div class="ti" style="top:819.6px;left:763px">/ton</div>
<div class="ti r" style="top:819.6px;right:388.79999999999995px">461</div>
<div class="ti r" style="top:819.6px;right:293.20000000000005px">-</div>
<div class="ti r" style="top:819.6px;right:202.29999999999995px">155</div>
<div class="ti r" style="top:819.6px;right:144.79999999999995px">84.21</div>
<div class="ti" style="top:819.6px;left:1141.8px">/ton</div>
<div class="ti r" style="top:819.6px;right:26.40000000000009px">616</div>
<div class="rh" style="top:833px;height:19px"></div>
<div class="tg gc" style="top:835.75px;left:19.5px">032200.00</div>
<div class="tg gd" style="top:835.75px;left:217.5px;letter-spacing:0.489px">WELDD WIRE FABRIC RNFRCNG</div>
<div class="rh" style="top:854px;height:16px"></div>
<div class="tp" style="top:857.2px;left:117.6px;letter-spacing:0.4px">032205.50</div>
<div class="tp" style="top:857.2px;left:217.5px;letter-spacing:0.139px">Welded Wire Fabric</div>
<div class="rh" style="top:872px;height:15px"></div>
<div class="ti" style="top:875.6px;left:217.2px;letter-spacing:0.305px">Welded wire fabric,sheets,deck,6 x 6 - w1.4xw1.4 (10 x 10),21lb/csf</div>
<div class="ti r" style="top:875.6px;right:622.4px">250.00</div>
<div class="ti" style="top:875.6px;left:663.7px">csf</div>
<div class="ti r" style="top:875.6px;right:523.2px">18.47</div>
<div class="ti" style="top:875.6px;left:763px">/csf</div>
<div class="ti r" style="top:875.6px;right:388.79999999999995px">4,616</div>
<div class="ti r" style="top:875.6px;right:293.20000000000005px">3,433</div>
<div class="ti r" style="top:875.6px;right:202.29999999999995px">-</div>
<div class="ti r" style="top:875.6px;right:144.79999999999995px">32.20</div>
<div class="ti" style="top:875.6px;left:1141.8px">/csf</div>
<div class="ti r" style="top:875.6px;right:26.40000000000009px">8,049</div>
<div class="rh" style="top:889px;height:19px"></div>
<div class="tg gc" style="top:891.75px;left:19.5px">033100.00</div>
<div class="tg gd" style="top:891.75px;left:217.5px;letter-spacing:0.733px">STRUCTURAL CONCRETE</div>
<div class="rh" style="top:910px;height:16px"></div>
<div class="tp" style="top:913.2px;left:117.6px;letter-spacing:0.4px">033105.35</div>
<div class="tp" style="top:913.2px;left:217.5px;letter-spacing:0.122px">Norml wt concrt,ready mix</div>
<div class="rh" style="top:928px;height:15px"><span class=st>*</span></div>
<div class="ti" style="top:931.6px;left:217.2px;letter-spacing:0.18px">Scrmnwt,3000 psi,inc lcl agg,snd,prt cmn and wtr,exc all add and trtm</div>
<div class="ti r" style="top:931.6px;right:622.4px">811.11</div>
<div class="ti" style="top:931.6px;left:663.7px">cy</div>
<div class="ti r" style="top:931.6px;right:523.2px">-</div>
<div class="ti r" style="top:931.6px;right:388.79999999999995px">-</div>
<div class="ti r" style="top:931.6px;right:293.20000000000005px">91,610</div>
<div class="ti r" style="top:931.6px;right:202.29999999999995px">-</div>
<div class="ti r" style="top:931.6px;right:144.79999999999995px">112.94</div>
<div class="ti" style="top:931.6px;left:1141.8px">/cy</div>
<div class="ti r" style="top:931.6px;right:26.40000000000009px">91,610</div>
<div class="rh" style="top:945px;height:15px"></div>
<div class="ti" style="top:948.6px;left:217.2px;letter-spacing:0.154px">Concrete, ready mix, regular weight, slabs/mats, 3000 psi</div>
<div class="ti r" style="top:948.6px;right:622.4px">514.33</div>
<div class="ti" style="top:948.6px;left:663.7px">cy</div>
<div class="ti r" style="top:948.6px;right:523.2px">-</div>
<div class="ti r" style="top:948.6px;right:388.79999999999995px">-</div>
<div class="ti r" style="top:948.6px;right:293.20000000000005px">58,091</div>
<div class="ti r" style="top:948.6px;right:202.29999999999995px">-</div>
<div class="ti r" style="top:948.6px;right:144.79999999999995px">112.94</div>
<div class="ti" style="top:948.6px;left:1141.8px">/cy</div>
<div class="ti r" style="top:948.6px;right:26.40000000000009px">58,091</div>
<div class="rh" style="top:962px;height:15px"></div>
<div class="ti" style="top:965.6px;left:217.2px;letter-spacing:0.122px">Concrete, ready mix, lightweight, 3000 psi, slab on deck</div>
<div class="ti r" style="top:965.6px;right:622.4px">270.06</div>
<div class="ti" style="top:965.6px;left:663.7px">cy</div>
<div class="ti r" style="top:965.6px;right:523.2px">-</div>
<div class="ti r" style="top:965.6px;right:388.79999999999995px">-</div>
<div class="ti r" style="top:965.6px;right:293.20000000000005px">23,830</div>
<div class="ti r" style="top:965.6px;right:202.29999999999995px">-</div>
<div class="ti r" style="top:965.6px;right:144.79999999999995px">88.24</div>
<div class="ti" style="top:965.6px;left:1141.8px">/cy</div>
<div class="ti r" style="top:965.6px;right:26.40000000000009px">23,830</div>
<div class="rh" style="top:979px;height:15px"></div>
<div class="ti" style="top:982.6px;left:217.2px;letter-spacing:0.13px">Concrete, ready mix, lightweight, 4000 psi, slab on deck</div>
<div class="ti r" style="top:982.6px;right:622.4px">37.63</div>
<div class="ti" style="top:982.6px;left:663.7px">cy</div>
<div class="ti r" style="top:982.6px;right:523.2px">-</div>
<div class="ti r" style="top:982.6px;right:388.79999999999995px">-</div>
<div class="ti r" style="top:982.6px;right:293.20000000000005px">4,443</div>
<div class="ti r" style="top:982.6px;right:202.29999999999995px">-</div>
<div class="ti r" style="top:982.6px;right:144.79999999999995px">117.92</div>
<div class="ti" style="top:982.6px;left:1141.8px">/cy</div>
<div class="ti r" style="top:982.6px;right:26.40000000000009px">4,443</div>
<div class="hl" style="top:127px"></div>
<div class="rhl" style="top:126px"></div>
<div class="hl" style="top:145px"></div>
<div class="rhl" style="top:144px"></div>
<div class="hl" style="top:162px"></div>
<div class="rhl" style="top:161px"></div>
<div class="hl" style="top:180px"></div>
<div class="rhl" style="top:179px"></div>
<div class="hl" style="top:197px"></div>
<div class="rhl" style="top:196px"></div>
<div class="hl" style="top:218px"></div>
<div class="rhl" style="top:217px"></div>
<div class="hl" style="top:236px"></div>
<div class="rhl" style="top:235px"></div>
<div class="hl" style="top:253px"></div>
<div class="rhl" style="top:252px"></div>
<div class="hl" style="top:270px"></div>
<div class="rhl" style="top:269px"></div>
<div class="hl" style="top:288px"></div>
<div class="rhl" style="top:287px"></div>
<div class="hl" style="top:305px"></div>
<div class="rhl" style="top:304px"></div>
<div class="hl" style="top:326px"></div>
<div class="rhl" style="top:325px"></div>
<div class="hl" style="top:344px"></div>
<div class="rhl" style="top:343px"></div>
<div class="hl" style="top:361px"></div>
<div class="rhl" style="top:360px"></div>
<div class="hl" style="top:379px"></div>
<div class="rhl" style="top:378px"></div>
<div class="hl" style="top:396px"></div>
<div class="rhl" style="top:395px"></div>
<div class="hl" style="top:413px"></div>
<div class="rhl" style="top:412px"></div>
<div class="hl" style="top:430px"></div>
<div class="rhl" style="top:429px"></div>
<div class="hl" style="top:448px"></div>
<div class="rhl" style="top:447px"></div>
<div class="hl" style="top:465px"></div>
<div class="rhl" style="top:464px"></div>
<div class="hl" style="top:486px"></div>
<div class="rhl" style="top:485px"></div>
<div class="hl" style="top:504px"></div>
<div class="rhl" style="top:503px"></div>
<div class="hl" style="top:521px"></div>
<div class="rhl" style="top:520px"></div>
<div class="hl" style="top:538px"></div>
<div class="rhl" style="top:537px"></div>
<div class="hl" style="top:555px"></div>
<div class="rhl" style="top:554px"></div>
<div class="hl" style="top:573px"></div>
<div class="rhl" style="top:572px"></div>
<div class="hl" style="top:590px"></div>
<div class="rhl" style="top:589px"></div>
<div class="hl" style="top:611px"></div>
<div class="rhl" style="top:610px"></div>
<div class="hl" style="top:629px"></div>
<div class="rhl" style="top:628px"></div>
<div class="hl" style="top:646px"></div>
<div class="rhl" style="top:645px"></div>
<div class="hl" style="top:663px"></div>
<div class="rhl" style="top:662px"></div>
<div class="hl" style="top:680px"></div>
<div class="rhl" style="top:679px"></div>
<div class="hl" style="top:697px"></div>
<div class="rhl" style="top:696px"></div>
<div class="hl" style="top:714px"></div>
<div class="rhl" style="top:713px"></div>
<div class="hl" style="top:731px"></div>
<div class="rhl" style="top:730px"></div>
<div class="hl" style="top:748px"></div>
<div class="rhl" style="top:747px"></div>
<div class="hl" style="top:765px"></div>
<div class="rhl" style="top:764px"></div>
<div class="hl" style="top:782px"></div>
<div class="rhl" style="top:781px"></div>
<div class="hl" style="top:799px"></div>
<div class="rhl" style="top:798px"></div>
<div class="hl" style="top:816px"></div>
<div class="rhl" style="top:815px"></div>
<div class="hl" style="top:833px"></div>
<div class="rhl" style="top:832px"></div>
<div class="hl" style="top:854px"></div>
<div class="rhl" style="top:853px"></div>
<div class="hl" style="top:872px"></div>
<div class="rhl" style="top:871px"></div>
<div class="hl" style="top:889px"></div>
<div class="rhl" style="top:888px"></div>
<div class="hl" style="top:910px"></div>
<div class="rhl" style="top:909px"></div>
<div class="hl" style="top:928px"></div>
<div class="rhl" style="top:927px"></div>
<div class="hl" style="top:945px"></div>
<div class="rhl" style="top:944px"></div>
<div class="hl" style="top:962px"></div>
<div class="rhl" style="top:961px"></div>
<div class="hl" style="top:979px"></div>
<div class="rhl" style="top:978px"></div>
<div class="hl" style="top:996px"></div>
<div class="rhl" style="top:995px"></div>
<!-- vertical scrollbar -->
<div style="left:1258px;top:66px;width:22px;height:920px;background:#e4e4e4"></div>
<div style="left:1256px;top:67px;width:22px;height:2px;background:#333"></div>
<div style="left:1278px;top:66px;width:2px;height:920px;background:#f4f4f4"></div>
<div class="sb" style="left:1259px;top:68px;width:19px;height:17px"></div>
<div class="sb" style="left:1259px;top:85px;width:19px;height:18px"></div>
<div class="sb" style="left:1259px;top:967px;width:19px;height:18px"></div>
<svg style="position:absolute;left:1259px;top:68px" width="19" height="917">
<path d="M5.5 8.5h7l-3.5 -3.5z" fill="#000"/>
<path d="M5.5 907h7l-3.5 3.5z" fill="#000"/>
</svg>
<!-- tab bar -->
<div style="left:0;top:985px;width:1280px;height:17px;background:#ccd0d1"></div>
<svg style="position:absolute;left:0;top:985px" width="1280" height="17">
<path d="M562.7 0.5L569.2 16.5H713.2L719.7 0.5" fill="#ccd0d1" stroke="#111" stroke-width="1.3"/><path d="M421 0.5L427.5 16.5H562.7L569.2 0.5" fill="#ccd0d1" stroke="#111" stroke-width="1.3"/><path d="M299.9 0.5L306.4 16.5H420.9L427.4 0.5" fill="#ccd0d1" stroke="#111" stroke-width="1.3"/><path d="M223.5 0.5L230.0 16.5H299.9L306.4 0.5" fill="#ccd0d1" stroke="#111" stroke-width="1.3"/><path d="M123.5 0.5L130.0 16.5H223.5L230 0.5" fill="#ccd0d1" stroke="#111" stroke-width="1.3"/><path d="M0 0.6H38.6" stroke="#111" stroke-width="1.3"/><path d="M130 0.6H958" stroke="#111" stroke-width="1.3"/><path d="M38.6 0L45.1 16.5H123.5L130 0z" fill="#fff"/><path d="M38.6 0L45.1 16.5M123.5 16.5L130 0" fill="none" stroke="#111" stroke-width="1.3"/>
</svg>
<div style="left:0;top:985px;width:2px;height:17px;background:#333"></div>
<svg style="position:absolute;left:0;top:984px" width="40" height="19">
<rect x="1.5" y="1" width="36" height="17" fill="#d4d4d4"/>
<path d="M2.5 2.5h16M2.5 2.5v14M20 2.5h16M20 2.5v14" stroke="#fff" stroke-width="1"/>
<path d="M1.7 1.2h36v16.5h-36z M19.3 1.2v16.5" fill="none" stroke="#111" stroke-width="1.2"/>
<path d="M11 5.5v7.5l-4.2-3.75z" fill="#6a6a6a"/><path d="M26.8 5.5v7.5l4.2-3.75z" fill="#6a6a6a"/>
</svg>
<div class="tab" style="left:48.2px;top:987.8px;font-size:13px;font-weight:bold">Phase/Item</div>
<div class="tab" style="left:138.6px;top:988.1px">Takeoff Order</div>
<div class="tab" style="left:235.6px;top:988.1px">Assembly</div>
<div class="tab" style="left:311.4px;top:988.1px">CSI Div/Assembly</div>
<div class="tab" style="left:437px;top:988.1px">Uniformat/Assembly</div>
<div class="tab" style="left:577.1px;top:988.1px">Component/Assembly</div>
<!-- horizontal scrollbar -->
<div style="left:958px;top:985px;width:2px;height:17px;background:#111"></div>
<div style="left:960px;top:985px;width:300px;height:17px;background:#ccd0d1"></div>
<div class="sb" style="left:961px;top:985px;width:19px;height:17px"></div>
<div class="sb" style="left:980px;top:985px;width:263px;height:17px"></div>
<div class="sb" style="left:1243px;top:985px;width:18px;height:17px"></div>
<svg style="position:absolute;left:961px;top:985px" width="300" height="17">
<path d="M11 5v7l-3.5-3.5z" fill="#000"/><path d="M290 5v7l3.5-3.5z" fill="#000"/>
</svg>
<div style="left:1261px;top:985px;width:17px;height:17px;background:#ccd0d1"></div>
<div style="left:0;top:1002px;width:1280px;height:1px;background:#fff"></div>
<!-- status bar -->
<div class="sp" style="left:0;width:628px"></div>
<div class="sp" style="left:631px;width:150px"></div>
<div class="sp" style="left:783px;width:107px"></div>
<div class="sp" style="left:892px;width:107px"></div>
<div class="sp" style="left:1001px;width:107px"></div>
<div class="sp" style="left:1110px;width:62px"></div>
<div class="sp" style="left:1174px;width:104px"></div>
<div class="stx" style="left:3px">For Help, press F1</div>
<div class="stx" style="left:633px">Grand Total: 6,197,512</div>
<div class="stx" style="left:785px">247.900/sqft</div>
<div class="stx" style="left:1115.5px;font-size:12.5px">6/6/2007</div>
</div>
</body></html>
